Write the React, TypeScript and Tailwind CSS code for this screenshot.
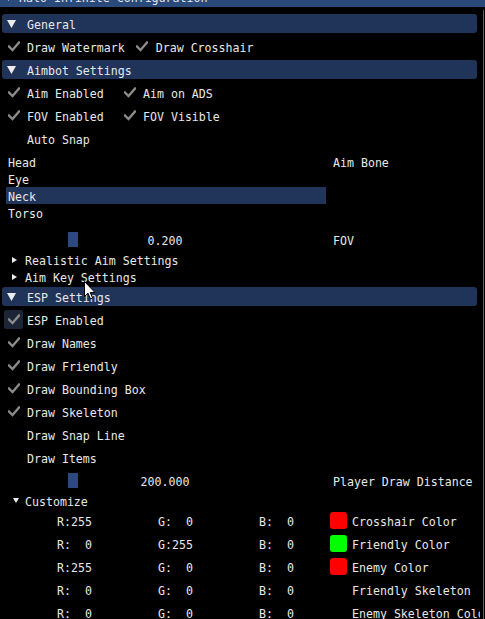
import React from "react";

const txt = "relative top-[2px] shrink-0 whitespace-pre";

const CheckMark = () => (
  <svg width="12" height="11" viewBox="0 0 12 11" fill="none">
    <polyline points="1,5.5 4.5,9 11,1.5" stroke="#8a8a8a" strokeWidth="2.4" strokeLinecap="square" />
  </svg>
);

function Check({ label, on, hover }: { label: string; on?: boolean; hover?: boolean }) {
  return (
    <div className="flex h-[19px] shrink-0 items-center">
      <div
        className={`flex h-[19px] w-[19px] shrink-0 items-center justify-center rounded-[2px] ${
          hover ? "bg-[#1c2536]" : ""
        }`}
      >
        {on && <CheckMark />}
      </div>
      <span className={`ml-[4px] ${txt}`}>{label}</span>
    </div>
  );
}

function Header({ label }: { label: string }) {
  return (
    <div className="ml-[2px] flex h-[19px] w-[475px] shrink-0 items-center rounded-[3px] bg-[#203459]">
      <svg width="9" height="8" viewBox="0 0 9 8" className="ml-[5px] shrink-0">
        <polygon points="0,0 9,0 4.5,8" fill="#ececec" />
      </svg>
      <span className={`ml-[11px] ${txt}`}>{label}</span>
    </div>
  );
}

function TreeNode({ label, open }: { label: string; open?: boolean }) {
  return (
    <div className="flex h-[13px] shrink-0 items-center pl-[12px]">
      {open ? (
        <svg width="6" height="5" viewBox="0 0 6 5" className="ml-[1px] shrink-0">
          <polygon points="0,0 6,0 3,5" fill="#ececec" />
        </svg>
      ) : (
        <svg width="5" height="6" viewBox="0 0 5 6" className="shrink-0">
          <polygon points="0,0 5,3 0,6" fill="#ececec" />
        </svg>
      )}
      <span className={`${open ? "ml-[6px]" : "ml-[8px]"} ${txt}`}>{label}</span>
    </div>
  );
}

function Slider({ value, label }: { value: string; label: string }) {
  return (
    <div className="flex h-[19px] shrink-0 items-center pl-[4px]">
      <div className="relative flex h-[19px] w-[322px] shrink-0 items-center justify-center">
        <div className="absolute left-[64px] top-[2px] h-[15px] w-[10px] bg-[#2e4a7d]" />
        <span className={txt}>{value}</span>
      </div>
      <span className={`ml-[7px] ${txt}`}>{label}</span>
    </div>
  );
}

function ColorRow({ r, g, b, color, label }: { r: string; g: string; b: string; color: string; label: string }) {
  return (
    <div className="flex h-[19px] shrink-0 items-center pl-[26px]">
      <div className="flex shrink-0 gap-[4px]">
        <span className={`w-[97px] text-center ${txt}`}>{r}</span>
        <span className={`w-[97px] text-center ${txt}`}>{g}</span>
        <span className={`w-[97px] text-center ${txt}`}>{b}</span>
      </div>
      <div className="ml-[5px] h-[17px] w-[17px] shrink-0 rounded-[3px]" style={{ background: color }} />
      <span className={`ml-[5px] ${txt}`}>{label}</span>
    </div>
  );
}

export default function App() {
  const bones = ["Head", "Eye", "Neck", "Torso"];

  return (
    <div className="relative h-[619px] w-[485px] overflow-hidden bg-black font-['DejaVu_Sans_Mono',monospace] text-[11.6px] leading-none text-[#e8e8e8]">
      <div className="h-[7px] overflow-hidden bg-[#294a7a]">
        <div className="-mt-[13px] flex h-[19px] items-center pl-[4px]">
          <svg width="9" height="8" viewBox="0 0 9 8" className="shrink-0">
            <polygon points="0,0 9,0 4.5,8" fill="#ececec" />
          </svg>
          <span className={`ml-[6px] ${txt}`}>Halo Infinite Configuration</span>
        </div>
      </div>

      <div className="flex">
        <div className="flex h-[612px] w-[480px] shrink-0 flex-col gap-[4px] overflow-hidden pt-[7px]">
          <Header label="General" />
          <div className="flex gap-[8px] pl-[4px]">
            <Check label="Draw Watermark" on />
            <Check label="Draw Crosshair" on />
          </div>

          <Header label="Aimbot Settings" />
          <div className="flex pl-[4px]">
            <div className="w-[116px] shrink-0">
              <Check label="Aim Enabled" on />
            </div>
            <Check label="Aim on ADS" on />
          </div>
          <div className="flex pl-[4px]">
            <div className="w-[116px] shrink-0">
              <Check label="FOV Enabled" on />
            </div>
            <Check label="FOV Visible" on />
          </div>
          <div className="flex pl-[4px]">
            <Check label="Auto Snap" />
          </div>

          <div className="flex h-[74px] shrink-0 pl-[4px]">
            <div className="w-[322px] shrink-0 pt-[1px]">
              {bones.map((b) => (
                <div
                  key={b}
                  className={`ml-[2px] flex h-[17px] items-center pl-[2px] ${b === "Neck" ? "bg-[#21345a]" : ""}`}
                >
                  <span className={txt}>{b}</span>
                </div>
              ))}
            </div>
            <div className="ml-[7px] mt-[1px] flex h-[17px] items-center">
              <span className={txt}>Aim Bone</span>
            </div>
          </div>

          <Slider value="0.200" label="FOV" />
          <TreeNode label="Realistic Aim Settings" />
          <TreeNode label="Aim Key Settings" />

          <Header label="ESP Settings" />
          <div className="flex shrink-0 flex-col gap-[4px] pl-[4px]">
            <Check label="ESP Enabled" on hover />
            <Check label="Draw Names" on />
            <Check label="Draw Friendly" on />
            <Check label="Draw Bounding Box" on />
            <Check label="Draw Skeleton" on />
            <Check label="Draw Snap Line" />
            <Check label="Draw Items" />
          </div>

          <Slider value="200.000" label="Player Draw Distance" />
          <TreeNode label="Customize" open />

          <ColorRow r="R:255" g="G:  0" b="B:  0" color="#ff0000" label="Crosshair Color" />
          <ColorRow r="R:  0" g="G:255" b="B:  0" color="#00ff00" label="Friendly Color" />
          <ColorRow r="R:255" g="G:  0" b="B:  0" color="#ff0000" label="Enemy Color" />
          <ColorRow r="R:  0" g="G:  0" b="B:  0" color="#000000" label="Friendly Skeleton" />
          <ColorRow r="R:  0" g="G:  0" b="B:  0" color="#000000" label="Enemy Skeleton Color" />
        </div>
        <div className="ml-[3px] mt-[3px] h-[609px] w-[1px] shrink-0 bg-[#5f5f5f]" />
      </div>

      <svg
        width="12"
        height="19"
        viewBox="0 0 12 19"
        className="absolute left-[84px] top-[281px]"
      >
        <path d="M0.5 0.5 L0.5 15.5 L4 12.2 L6.5 18 L8.6 17 L6.2 11.5 L11 11.5 Z" fill="#ffffff" stroke="#000000" strokeWidth="1" />
      </svg>
    </div>
  );
}
